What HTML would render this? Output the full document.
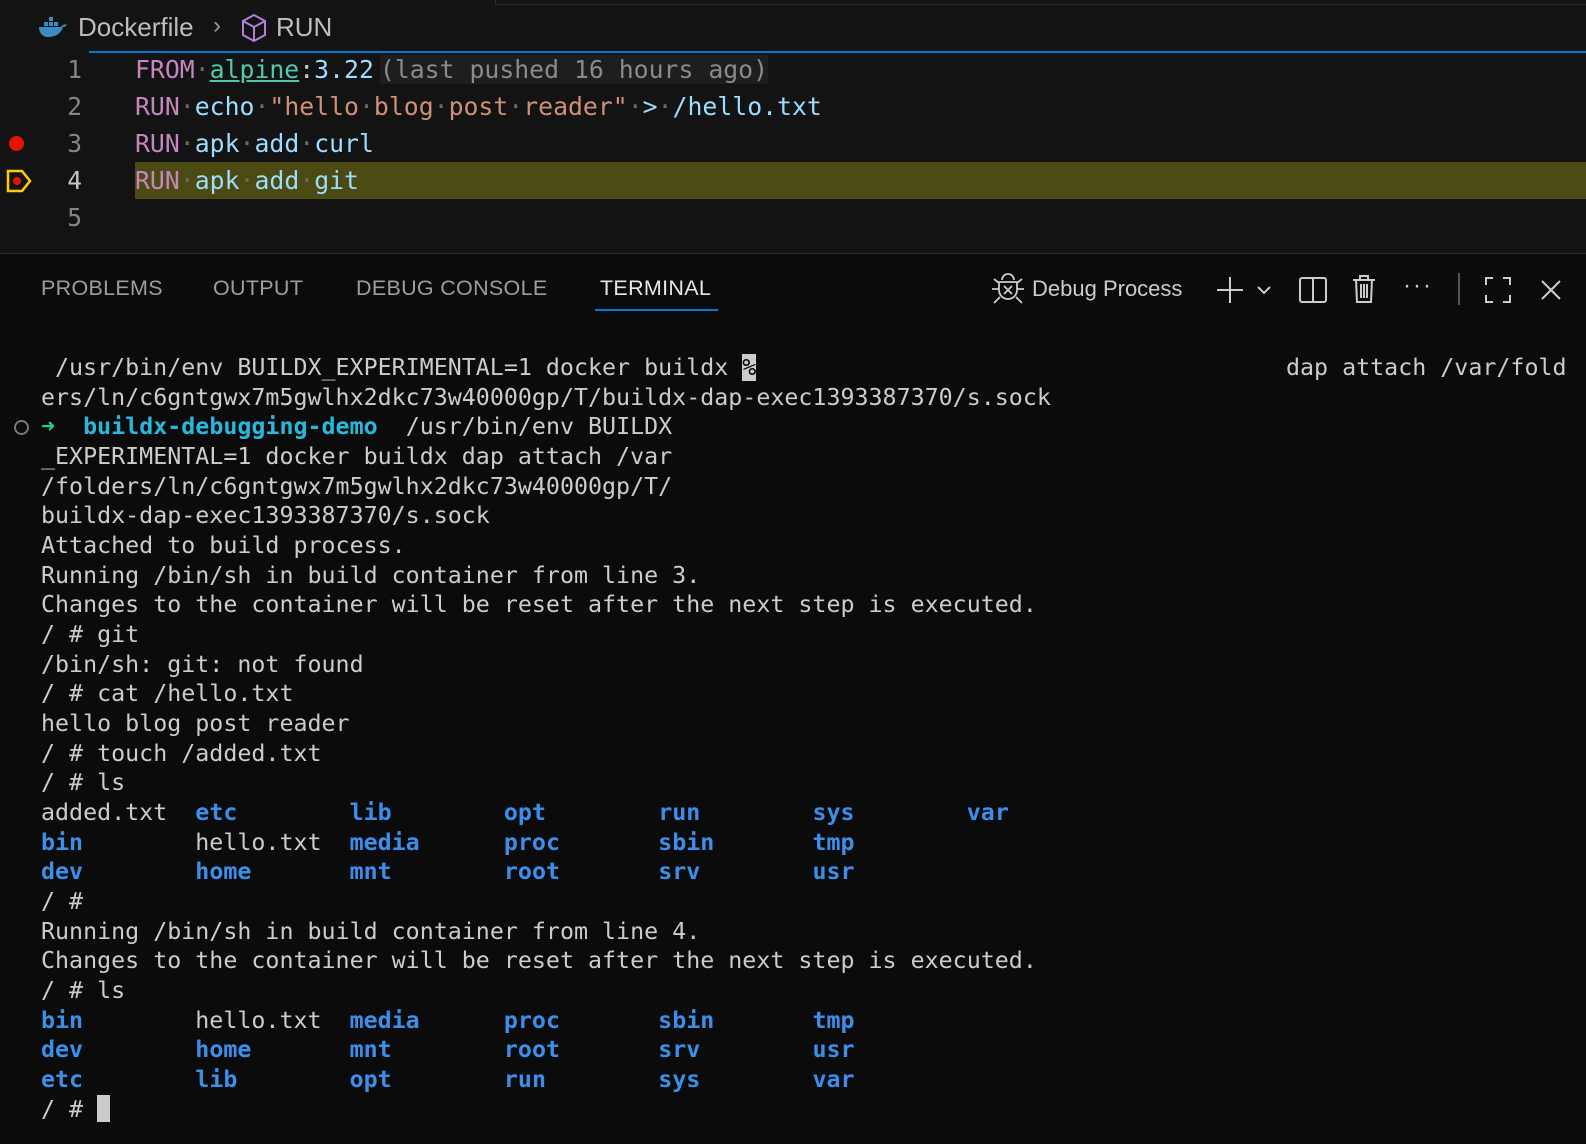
<!DOCTYPE html>
<html><head><meta charset="utf-8"><style>
*{margin:0;padding:0;box-sizing:border-box}
body{width:1586px;height:1144px;background:#0b0b0b;overflow:hidden;position:relative;font-family:"Liberation Sans",sans-serif;color:#ccc}
.ed{position:absolute;left:0;top:0;width:1586px;height:253px;background:#131313}
.mono{font-family:"DejaVu Sans Mono","Liberation Mono",monospace;white-space:pre}
.el{position:absolute;left:135px;font-size:24.8px;height:37px;line-height:37px}
.ln{position:absolute;left:60px;width:22px;text-align:right;font-size:24.6px;line-height:37px;color:#858585}
.t{position:absolute;left:41px;font-size:23.3px;line-height:30px;color:#cccccc}
.k{color:#c586c0}.f{color:#9cdcfe}.s{color:#ce9178}.d{color:#6a6a6a}
.b{color:#3b8eea;font-weight:bold}
.tab{position:absolute;top:276px;font-size:21.5px;color:#9d9d9d;letter-spacing:0.3px}
</style></head><body>
<div class="ed"></div>
<div style="position:absolute;left:495px;top:0;width:1091px;height:5px;border-bottom:1px solid #2a2a2a;border-left:1px solid #2a2a2a"></div>
<svg style="position:absolute;left:37px;top:16px" width="32" height="24" viewBox="0 0 32 24"><path d="M2 11h22c2-3 5-3 6-2-1 1-2 2-4 2-2 7-8 10-15 10C5 21 2 16 2 11z" fill="#3a8cc4"/><rect x="7" y="6" width="4" height="4" fill="#3a8cc4"/><rect x="12" y="6" width="4" height="4" fill="#3a8cc4"/><rect x="17" y="6" width="4" height="4" fill="#3a8cc4"/><rect x="12" y="1" width="4" height="4" fill="#3a8cc4"/></svg>
<div style="position:absolute;left:78px;top:12px;font-size:26px;color:#bdbdbd">Dockerfile</div>
<div style="position:absolute;left:213px;top:12px;font-size:24px;color:#999">&#x203A;</div>
<svg style="position:absolute;left:240px;top:13px" width="28" height="30" viewBox="0 0 28 30"><path d="M14 2 25 8v14L14 28 3 22V8zM3 8l11 6 11-6M14 14v14" fill="none" stroke="#b180d7" stroke-width="2"/></svg>
<div style="position:absolute;left:276px;top:12px;font-size:26px;color:#bdbdbd">RUN</div>
<div style="position:absolute;left:89px;top:51px;width:1497px;height:2px;background:#0078d4"></div>
<div style="position:absolute;left:135px;top:162px;width:1451px;height:37px;background:#4b4a12"></div>
<div class="ln mono" style="top:51px">1</div>
<div class="ln mono" style="top:88px">2</div>
<div class="ln mono" style="top:125px">3</div>
<div class="ln mono" style="top:162px;color:#c6c6c6">4</div>
<div class="ln mono" style="top:199px">5</div>
<div class="el mono" style="top:51px"><span class="k">FROM</span><span class="d">·</span><span style="color:#4ec9b0;text-decoration:underline">alpine</span>:<span class="f">3.22</span><span style="color:#8a8a8a;background:#1e1e1e;margin-left:6px">(last pushed 16 hours ago)</span></div>
<div class="el mono" style="top:88px"><span class="k">RUN</span><span class="d">·</span><span class="f">echo</span><span class="d">·</span><span class="s">"hello<span class="d">·</span>blog<span class="d">·</span>post<span class="d">·</span>reader"</span><span class="d">·</span><span class="f">&gt;</span><span class="d">·</span><span class="f">/hello.txt</span></div>
<div class="el mono" style="top:125px"><span class="k">RUN</span><span class="d">·</span><span class="f">apk</span><span class="d">·</span><span class="f">add</span><span class="d">·</span><span class="f">curl</span></div>
<div class="el mono" style="top:162px"><span class="k">RUN</span><span class="d">·</span><span class="f">apk</span><span class="d">·</span><span class="f">add</span><span class="d">·</span><span class="f">git</span></div>
<div style="position:absolute;left:9px;top:136px;width:15px;height:15px;border-radius:50%;background:#e51400"></div>
<svg style="position:absolute;left:5px;top:167px" width="28" height="28" viewBox="0 0 28 28"><path d="M3 4h14l8 10-8 10H3z" fill="none" stroke="#ffcc00" stroke-width="2.5"/><circle cx="12" cy="14" r="4" fill="#e51400"/></svg>
<div style="position:absolute;left:0;top:253px;width:1586px;height:1px;background:#2b2b2b"></div>
<div class="tab" style="left:41px">PROBLEMS</div>
<div class="tab" style="left:213px">OUTPUT</div>
<div class="tab" style="left:356px">DEBUG CONSOLE</div>
<div class="tab" style="left:600px;color:#e7e7e7">TERMINAL</div>
<div style="position:absolute;left:595px;top:309px;width:123px;height:2px;background:#0078d4"></div>
<svg style="position:absolute;left:990px;top:273px" width="36" height="34" viewBox="0 0 36 34" fill="none" stroke="#ccc" stroke-width="1.8"><path d="M12 7a6 6 0 0 1 12 0M9 9h18v8a9 9 0 0 1-18 0zM2 16h7M27 16h7M4 6l5 4M32 6l-5 4M4 30l6-6M32 30l-6-6M14 13l8 8M22 13l-8 8"/></svg>
<div style="position:absolute;left:1032px;top:276px;font-size:22px;color:#ccc">Debug Process</div>
<svg style="position:absolute;left:1214px;top:274px" width="64" height="32" viewBox="0 0 64 32" fill="none" stroke="#ccc" stroke-width="2"><path d="M16 3v26M3 16h26M44 13l6 6 6-6"/></svg>
<svg style="position:absolute;left:1296px;top:274px" width="34" height="32" viewBox="0 0 34 32" fill="none" stroke="#ccc" stroke-width="2"><rect x="4" y="4" width="26" height="24" rx="2"/><path d="M17 4v24"/></svg>
<svg style="position:absolute;left:1350px;top:272px" width="28" height="34" viewBox="0 0 28 34" fill="none" stroke="#ccc" stroke-width="2"><path d="M3 8h22M10 8V4h8v4M6 8l1 22h14l1-22M11 12v14M14 12v14M17 12v14"/></svg>
<div style="position:absolute;left:1403px;top:272px;font-size:24px;color:#ccc;letter-spacing:2px">···</div>
<div style="position:absolute;left:1458px;top:273px;width:2px;height:32px;background:#555"></div>
<svg style="position:absolute;left:1483px;top:275px" width="30" height="30" viewBox="0 0 30 30" fill="none" stroke="#ccc" stroke-width="2"><path d="M3 10V3h7M20 3h7v7M27 20v7h-7M10 27H3v-7"/></svg>
<svg style="position:absolute;left:1538px;top:277px" width="26" height="26" viewBox="0 0 26 26" fill="none" stroke="#ccc" stroke-width="2"><path d="M4 4l18 18M22 4 4 22"/></svg>
<div class="t mono" style="top:353px;left:55px">/usr/bin/env BUILDX_EXPERIMENTAL=1 docker buildx <span style="background:#ccc;color:#000">%</span></div>
<div class="t mono" style="top:353px;left:1286px">dap attach /var/fold</div>
<div class="t mono" style="top:383px">ers/ln/c6gntgwx7m5gwlhx2dkc73w40000gp/T/buildx-dap-exec1393387370/s.sock</div>
<div style="position:absolute;left:14px;top:420px;width:15px;height:15px;border-radius:50%;border:2px solid #777"></div>
<div class="t mono" style="top:412px"><span style="color:#23d18b;font-weight:bold">➜</span>  <span style="color:#29b8db;font-weight:bold">buildx-debugging-demo</span>  /usr/bin/env BUILDX</div>
<div class="t mono" style="top:442px">_EXPERIMENTAL=1 docker buildx dap attach /var</div>
<div class="t mono" style="top:472px">/folders/ln/c6gntgwx7m5gwlhx2dkc73w40000gp/T/</div>
<div class="t mono" style="top:501px">buildx-dap-exec1393387370/s.sock</div>
<div class="t mono" style="top:531px">Attached to build process.</div>
<div class="t mono" style="top:561px">Running /bin/sh in build container from line 3.</div>
<div class="t mono" style="top:590px">Changes to the container will be reset after the next step is executed.</div>
<div class="t mono" style="top:620px">/ # git</div>
<div class="t mono" style="top:650px">/bin/sh: git: not found</div>
<div class="t mono" style="top:679px">/ # cat /hello.txt</div>
<div class="t mono" style="top:709px">hello blog post reader</div>
<div class="t mono" style="top:739px">/ # touch /added.txt</div>
<div class="t mono" style="top:768px">/ # ls</div>
<div class="t mono" style="top:798px">added.txt  <span class="b">etc</span>        <span class="b">lib</span>        <span class="b">opt</span>        <span class="b">run</span>        <span class="b">sys</span>        <span class="b">var</span></div>
<div class="t mono" style="top:828px"><span class="b">bin</span>        hello.txt  <span class="b">media</span>      <span class="b">proc</span>       <span class="b">sbin</span>       <span class="b">tmp</span></div>
<div class="t mono" style="top:857px"><span class="b">dev</span>        <span class="b">home</span>       <span class="b">mnt</span>        <span class="b">root</span>       <span class="b">srv</span>        <span class="b">usr</span></div>
<div class="t mono" style="top:887px">/ #</div>
<div class="t mono" style="top:917px">Running /bin/sh in build container from line 4.</div>
<div class="t mono" style="top:946px">Changes to the container will be reset after the next step is executed.</div>
<div class="t mono" style="top:976px">/ # ls</div>
<div class="t mono" style="top:1006px"><span class="b">bin</span>        hello.txt  <span class="b">media</span>      <span class="b">proc</span>       <span class="b">sbin</span>       <span class="b">tmp</span></div>
<div class="t mono" style="top:1035px"><span class="b">dev</span>        <span class="b">home</span>       <span class="b">mnt</span>        <span class="b">root</span>       <span class="b">srv</span>        <span class="b">usr</span></div>
<div class="t mono" style="top:1065px"><span class="b">etc</span>        <span class="b">lib</span>        <span class="b">opt</span>        <span class="b">run</span>        <span class="b">sys</span>        <span class="b">var</span></div>
<div class="t mono" style="top:1095px">/ # <span style="display:inline-block;width:13px;height:27px;background:#ccc;vertical-align:-5px"></span></div>
</body></html>
